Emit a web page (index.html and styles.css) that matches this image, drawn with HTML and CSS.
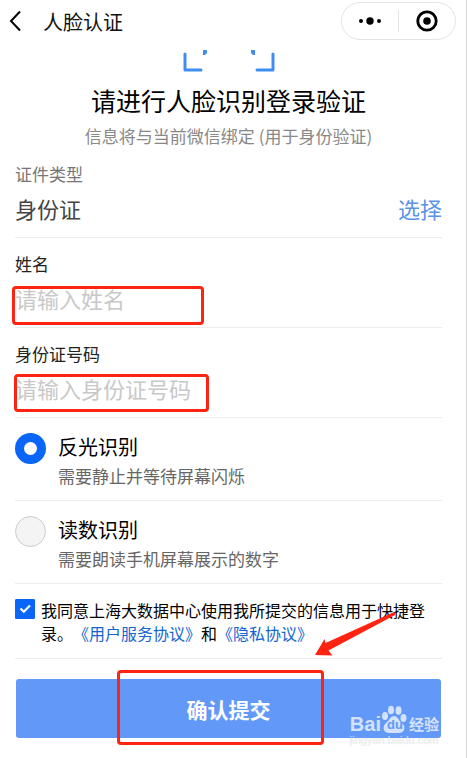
FILE: index.html
```html
<!DOCTYPE html>
<html lang="zh-CN">
<head>
    <meta charset="UTF-8">
    <meta name="viewport" content="width=device-width, initial-scale=1.0">
    <title>人脸认证</title>
    <link rel="stylesheet" href="styles.css">
</head>
<body>
    <header class="navbar">
        <button type="button" class="back" aria-label="返回">
            <svg width="14" height="22" viewBox="0 0 14 22"><path d="M12 1.500L3 11l9 9.500" fill="none" stroke="#000" stroke-width="2"/></svg>
        </button>
        <h1>人脸认证</h1>
        <div class="capsule">
            <button type="button" aria-label="更多">
                <svg width="24" height="10" viewBox="0 0 24 10"><circle cx="3" cy="5" r="2"/><circle cx="12" cy="5" r="3.700"/><circle cx="21" cy="5" r="2"/></svg>
            </button>
            <button type="button" aria-label="关闭">
                <svg width="22" height="22" viewBox="0 0 22 22"><circle cx="11" cy="11" r="9.200" fill="none" stroke="#000" stroke-width="2.800"/><circle cx="11" cy="11" r="3.800"/></svg>
            </button>
        </div>
    </header>

    <main>
        <div class="intro">
            <svg class="scan" width="92" height="24" viewBox="0 0 92 24">
                <g fill="none" stroke="#3f8df0" stroke-width="3" stroke-linejoin="round" stroke-linecap="round">
                    <path d="M2 6v16H18M90 6v16H74"/>
                </g>
                <path d="M20 2h4v3l-2 2h-2zM72 2h-4v3l2 2h2z" fill="#3f8df0"/>
            </svg>
            <h2>请进行人脸识别登录验证</h2>
            <p>信息将与当前微信绑定 (用于身份验证)</p>
        </div>

        <form id="verifyForm">
            <div class="field">
                <span class="label muted">证件类型</span>
                <div class="picker">
                    <span>身份证</span>
                    <button type="button" class="choose">选择</button>
                </div>
            </div>

            <div class="field">
                <label class="label" for="realName">姓名</label>
                <input type="text" id="realName" name="realName" placeholder="请输入姓名">
                <span class="mark mark-name"></span>
            </div>

            <div class="field">
                <label class="label" for="idNumber">身份证号码</label>
                <input type="text" id="idNumber" name="idNumber" placeholder="请输入身份证号码">
                <span class="mark mark-id"></span>
            </div>

            <label class="option">
                <input type="radio" name="mode" value="light" checked>
                <span class="option-text">
                    <span class="option-title">反光识别</span>
                    <span class="option-desc">需要静止并等待屏幕闪烁</span>
                </span>
            </label>

            <label class="option">
                <input type="radio" name="mode" value="number">
                <span class="option-text">
                    <span class="option-title">读数识别</span>
                    <span class="option-desc">需要朗读手机屏幕展示的数字</span>
                </span>
            </label>

            <div class="agree">
                <span class="check">
                    <input type="checkbox" id="agree" name="agree" checked>
                    <svg width="20" height="20" viewBox="0 0 20 20"><path d="M5.500 9.500l3.300 3.200 6.200-6.200" fill="none" stroke="#fff" stroke-width="2.200"/></svg>
                </span>
                <p><label for="agree">我同意上海大数据中心使用我所提交的信息用于快捷登录。</label><a href="#">《用户服务协议》</a>和<a href="#">《隐私协议》</a></p>
                <svg class="arrow" width="84" height="46" viewBox="0 0 84 46"><path d="M1 44l9.500-16 1 4L79 1.500l3 0-1 2.500L14.500 39.500l4 5z" fill="#ff2412"/></svg>
            </div>

            <div class="submit">
                <button type="submit">确认提交</button>
                <span class="mark mark-submit"></span>
                <div class="watermark">
                    <div class="wm-logo">
                        <span class="wm-bai">Bai</span>
                        <span class="wm-paw">
                            <svg width="26" height="29" viewBox="0 0 26 29" fill="#fff">
                                <ellipse cx="4" cy="11" rx="3" ry="4"/>
                                <ellipse cx="10" cy="5" rx="3" ry="4.300"/>
                                <ellipse cx="17.500" cy="5.500" rx="3" ry="4.300"/>
                                <ellipse cx="22.500" cy="13" rx="3" ry="4"/>
                                <path d="M13 11c-4 0-4 4-7.500 6.500-3 2.500-3.500 5-2.500 7.500 1.500 3.500 5.500 3 10 3s8.500.5 10-3c1-2.500.5-5-2.500-7.500C17 15 17 11 13 11z"/>
                            </svg>
                            <span class="wm-du">du</span>
                        </span>
                        <span class="wm-jy">经验</span>
                    </div>
                    <div class="wm-url">jingyan.baidu.com</div>
                </div>
            </div>
        </form>
    </main>
</body>
</html>
```
FILE: styles.css
```css
* { box-sizing: border-box; }
body {
    margin: 0;
    min-height: 100vh;
    background: #fff;
    color: #111;
    border-right: 1px solid #d9d9d9;
    font-family: "Noto Sans CJK SC", sans-serif;
}
button { border: none; background: none; padding: 0; font-family: inherit; cursor: pointer; }
h1, h2, p { margin: 0; font-weight: 400; }
svg { display: block; }
a { color: #1464d2; text-decoration: none; }

/* top bar */
.navbar { display: flex; align-items: center; height: 42px; padding: 0 10px 0 8px; }
.navbar h1 { flex: 1; margin-left: 21px; padding-top: 2px; font-size: 20px; line-height: 28px; }
.capsule {
    display: flex;
    align-items: center;
    width: 115px;
    height: 38px;
    border: 1px solid #e4e4e4;
    border-radius: 19px;
}
.capsule button { flex: 1; height: 22px; display: flex; align-items: center; justify-content: center; }
.capsule button + button { border-left: 1px solid #e4e4e4; }

main { padding: 6px 24px 20px 15px; }

.intro { display: flex; flex-direction: column; align-items: center; text-align: center; }
.intro h2 { margin-top: 10px; font-size: 25px; line-height: 36px; color: #000; }
.intro p { margin-top: 6px; font-size: 17px; line-height: 24px; color: #888; }

/* form rows */
.field { position: relative; padding: 14px 0; border-bottom: 1px solid #ececec; }
.label { display: block; margin-bottom: 7px; font-size: 17px; line-height: 24px; color: #222; }
.muted { color: #777; }
.picker { display: flex; justify-content: space-between; font-size: 22px; line-height: 30px; color: #444; }
.choose { font-size: 22px; line-height: 30px; color: #5b93ea; }
.field input {
    display: block;
    width: 100%;
    height: 30px;
    padding: 0;
    border: none;
    outline: none;
    background: none;
    font-family: inherit;
    font-size: 22px;
    color: #222;
}
.field input::placeholder { color: #c8c8c8; }

.option { display: flex; gap: 12px; padding: 15px 0 12px; border-bottom: 1px solid #ececec; }
.option input {
    appearance: none;
    width: 31px;
    height: 31px;
    margin: 0;
    border: 1px solid #ccc;
    border-radius: 50%;
    background: #f4f4f4;
}
.option input:checked { border: 9px solid #0a66f8; background: #fff; }
.option-text { display: flex; flex-direction: column; gap: 3px; }
.option-title { font-size: 20px; line-height: 28px; color: #000; }
.option-desc { font-size: 17px; line-height: 24px; color: #666; }

.agree { position: relative; display: flex; gap: 6px; padding: 15px 0 13px; border-bottom: 1px solid #ececec; }
.agree p { flex: 1; font-size: 16px; line-height: 23px; color: #000; text-spacing-trim: space-all; }
.check { position: relative; width: 20px; height: 20px; }
.check input { appearance: none; display: block; width: 20px; height: 20px; margin: 0; border: 1px solid #0a66f8; border-radius: 1px; }
.check input:checked { background: #0a66f8; }
.check svg { position: absolute; top: 0; left: 0; pointer-events: none; }

.submit { position: relative; margin: 20px 1px 0; }
.submit button {
    width: 100%;
    height: 59px;
    border-radius: 3px;
    background: #6299f9;
    color: #fff;
    font-size: 21px;
    font-weight: 700;
}

/* red callouts */
.mark { position: absolute; border: 3px solid #ff2412; border-radius: 4px; pointer-events: none; }
.mark-name { left: -3px; top: 48px; width: 192px; height: 39px; }
.mark-id { left: -1px; top: 46px; width: 195px; height: 38px; }
.mark-submit { left: 101px; top: -9px; width: 207px; height: 75px; }
.arrow { position: absolute; right: 44px; bottom: 1px; }

.watermark { position: absolute; right: 2px; bottom: -8px; color: #fff; opacity: 0.72; white-space: nowrap; pointer-events: none; }
.wm-logo { display: flex; align-items: flex-end; }
.wm-bai { font: bold 20px/20px "Liberation Sans", sans-serif; }
.wm-paw { position: relative; }
.wm-du { position: absolute; left: 6px; bottom: 2px; font: bold 13px/14px "Liberation Sans", sans-serif; color: #6299f9; }
.wm-jy { margin-left: 2px; font-size: 15px; font-weight: 700; line-height: 20px; }
.wm-url { font: 11px/12px "Liberation Sans", sans-serif; color: #eee; text-shadow: 0 0 1px #ccc; }
```
